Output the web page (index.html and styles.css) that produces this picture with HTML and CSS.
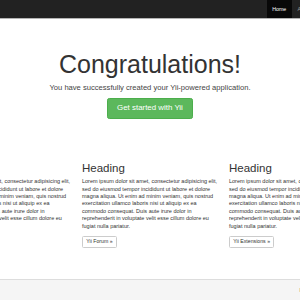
FILE: index.html
```html
<!DOCTYPE html>
<html lang="en">
<head>
  <meta charset="UTF-8" />
  <meta name="viewport" content="width=device-width, initial-scale=1" />
  <title>My Yii Application</title>
  <link rel="stylesheet" href="styles.css">
</head>
<body>
  <!-- Top navbar -->
  <nav class="navbar">
    <div class="container navbar-inner">
      <a href="#" class="brand">My Company</a>
      <ul class="nav-links">
        <li class="active"><a href="#">Home</a></li>
        <li><a href="#">About</a></li>
        <li><a href="#">Contact</a></li>
        <li><a href="#">Login</a></li>
      </ul>
    </div>
  </nav>

  <div class="site-main">
    <div class="jumbotron">
      <h1>Congratulations!</h1>
      <p class="lead">You have successfully created your Yii-powered application.</p>
      <a href="#" class="btn btn-success">Get started with Yii</a>
    </div>

    <div class="container body-content">
      <div class="col">
        <h2>Heading</h2>
        <p>Lorem ipsum dolor sit amet, consectetur adipisicing elit, sed do eiusmod tempor incididunt ut labore et dolore magna aliqua. Ut enim ad minim veniam, quis nostrud exercitation ullamco laboris nisi ut aliquip ex ea commodo consequat. Duis aute irure dolor in reprehenderit in voluptate velit esse cillum dolore eu fugiat nulla pariatur.</p>
        <a href="#" class="btn btn-default">Yii Documentation &raquo;</a>
      </div>
      <div class="col">
        <h2>Heading</h2>
        <p>Lorem ipsum dolor sit amet, consectetur adipisicing elit, sed do eiusmod tempor incididunt ut labore et dolore magna aliqua. Ut enim ad minim veniam, quis nostrud exercitation ullamco laboris nisi ut aliquip ex ea commodo consequat. Duis aute irure dolor in reprehenderit in voluptate velit esse cillum dolore eu fugiat nulla pariatur.</p>
        <a href="#" class="btn btn-default">Yii Forum &raquo;</a>
      </div>
      <div class="col">
        <h2>Heading</h2>
        <p>Lorem ipsum dolor sit amet, consectetur adipisicing elit, sed do eiusmod tempor incididunt ut labore et dolore magna aliqua. Ut enim ad minim veniam, quis nostrud exercitation ullamco laboris nisi ut aliquip ex ea commodo consequat. Duis aute irure dolor in reprehenderit in voluptate velit esse cillum dolore eu fugiat nulla pariatur.</p>
        <a href="#" class="btn btn-default">Yii Extensions &raquo;</a>
      </div>
    </div>
  </div>

  <footer class="footer">
    <div class="container footer-inner">
      <p>&copy; My Company 2024</p>
      <p>Powered by Yii Framework</p>
    </div>
  </footer>
</body>
</html>
```

FILE: styles.css
```css
html, body {
  overflow: hidden;
}

body {
  margin: 0;
  font-family: 'Liberation Sans', Arial, sans-serif;
  font-size: 5.5px;
  line-height: 7.4px;
  color: #333;
  background: #fff;
}

a {
  text-decoration: none;
}

.container {
  width: 441px;
  margin-left: calc(50% - 220.5px);
  box-sizing: border-box;
}

/* navbar */
.navbar {
  background-color: #222;
  border-bottom: 1px solid #b4b4b4;
}

.navbar-inner {
  display: flex;
  justify-content: space-between;
  height: 18px;
  padding-left: 5.6px;
}

.brand {
  color: #9d9d9d;
  font-size: 6.8px;
  line-height: 18px;
}

.nav-links {
  display: flex;
  list-style: none;
  margin: 0;
  padding: 0;
}

.nav-links a {
  display: block;
  padding: 0 5.6px;
  font-size: 5.3px;
  line-height: 18px;
  color: #9d9d9d;
}

.nav-links .active a {
  background-color: #080808;
  color: #fff;
}

/* jumbotron */
.site-main {
  padding: 26px 0 31px;
}

.jumbotron {
  text-align: center;
  padding-bottom: 30px;
}

.jumbotron h1 {
  margin: 5.6px 0 3.8px;
  font-size: 25px;
  line-height: 27.5px;
  font-weight: normal;
  color: #333;
}

.lead {
  margin: 0 0 5.1px;
  font-size: 7.6px;
  line-height: 11px;
  color: #444;
}

.btn {
  display: inline-block;
  border: 1px solid transparent;
  white-space: nowrap;
}

.btn-success {
  padding: 4.25px 9px;
  font-size: 7.9px;
  line-height: 10.5px;
  color: #fff;
  background-color: #5cb85c;
  border-color: #4cae4c;
  border-radius: 2.3px;
}

/* three columns */
.body-content {
  display: grid;
  grid-template-columns: repeat(3, 147px);
}

.col {
  padding: 0 5px 0 5.5px;
}

.col h2 {
  margin: 12.7px 0 3.9px;
  font-size: 11.5px;
  line-height: 12.65px;
  font-weight: normal;
  color: #333;
}

.col p {
  margin: 0 0 5.9px;
}

.btn-default {
  padding: 1.3px 3.3px;
  font-size: 5.2px;
  line-height: 7.4px;
  color: #333;
  background-color: #fff;
  border-color: #ccc;
  border-radius: 1.5px;
}

/* footer */
.footer {
  height: 40px;
  background-color: #f5f5f5;
  border-top: 1px solid #ddd;
}

.footer-inner {
  display: flex;
  justify-content: space-between;
  padding: 0 5.6px;
}

.footer-inner p {
  margin: 7.5px 0 0;
}
```
